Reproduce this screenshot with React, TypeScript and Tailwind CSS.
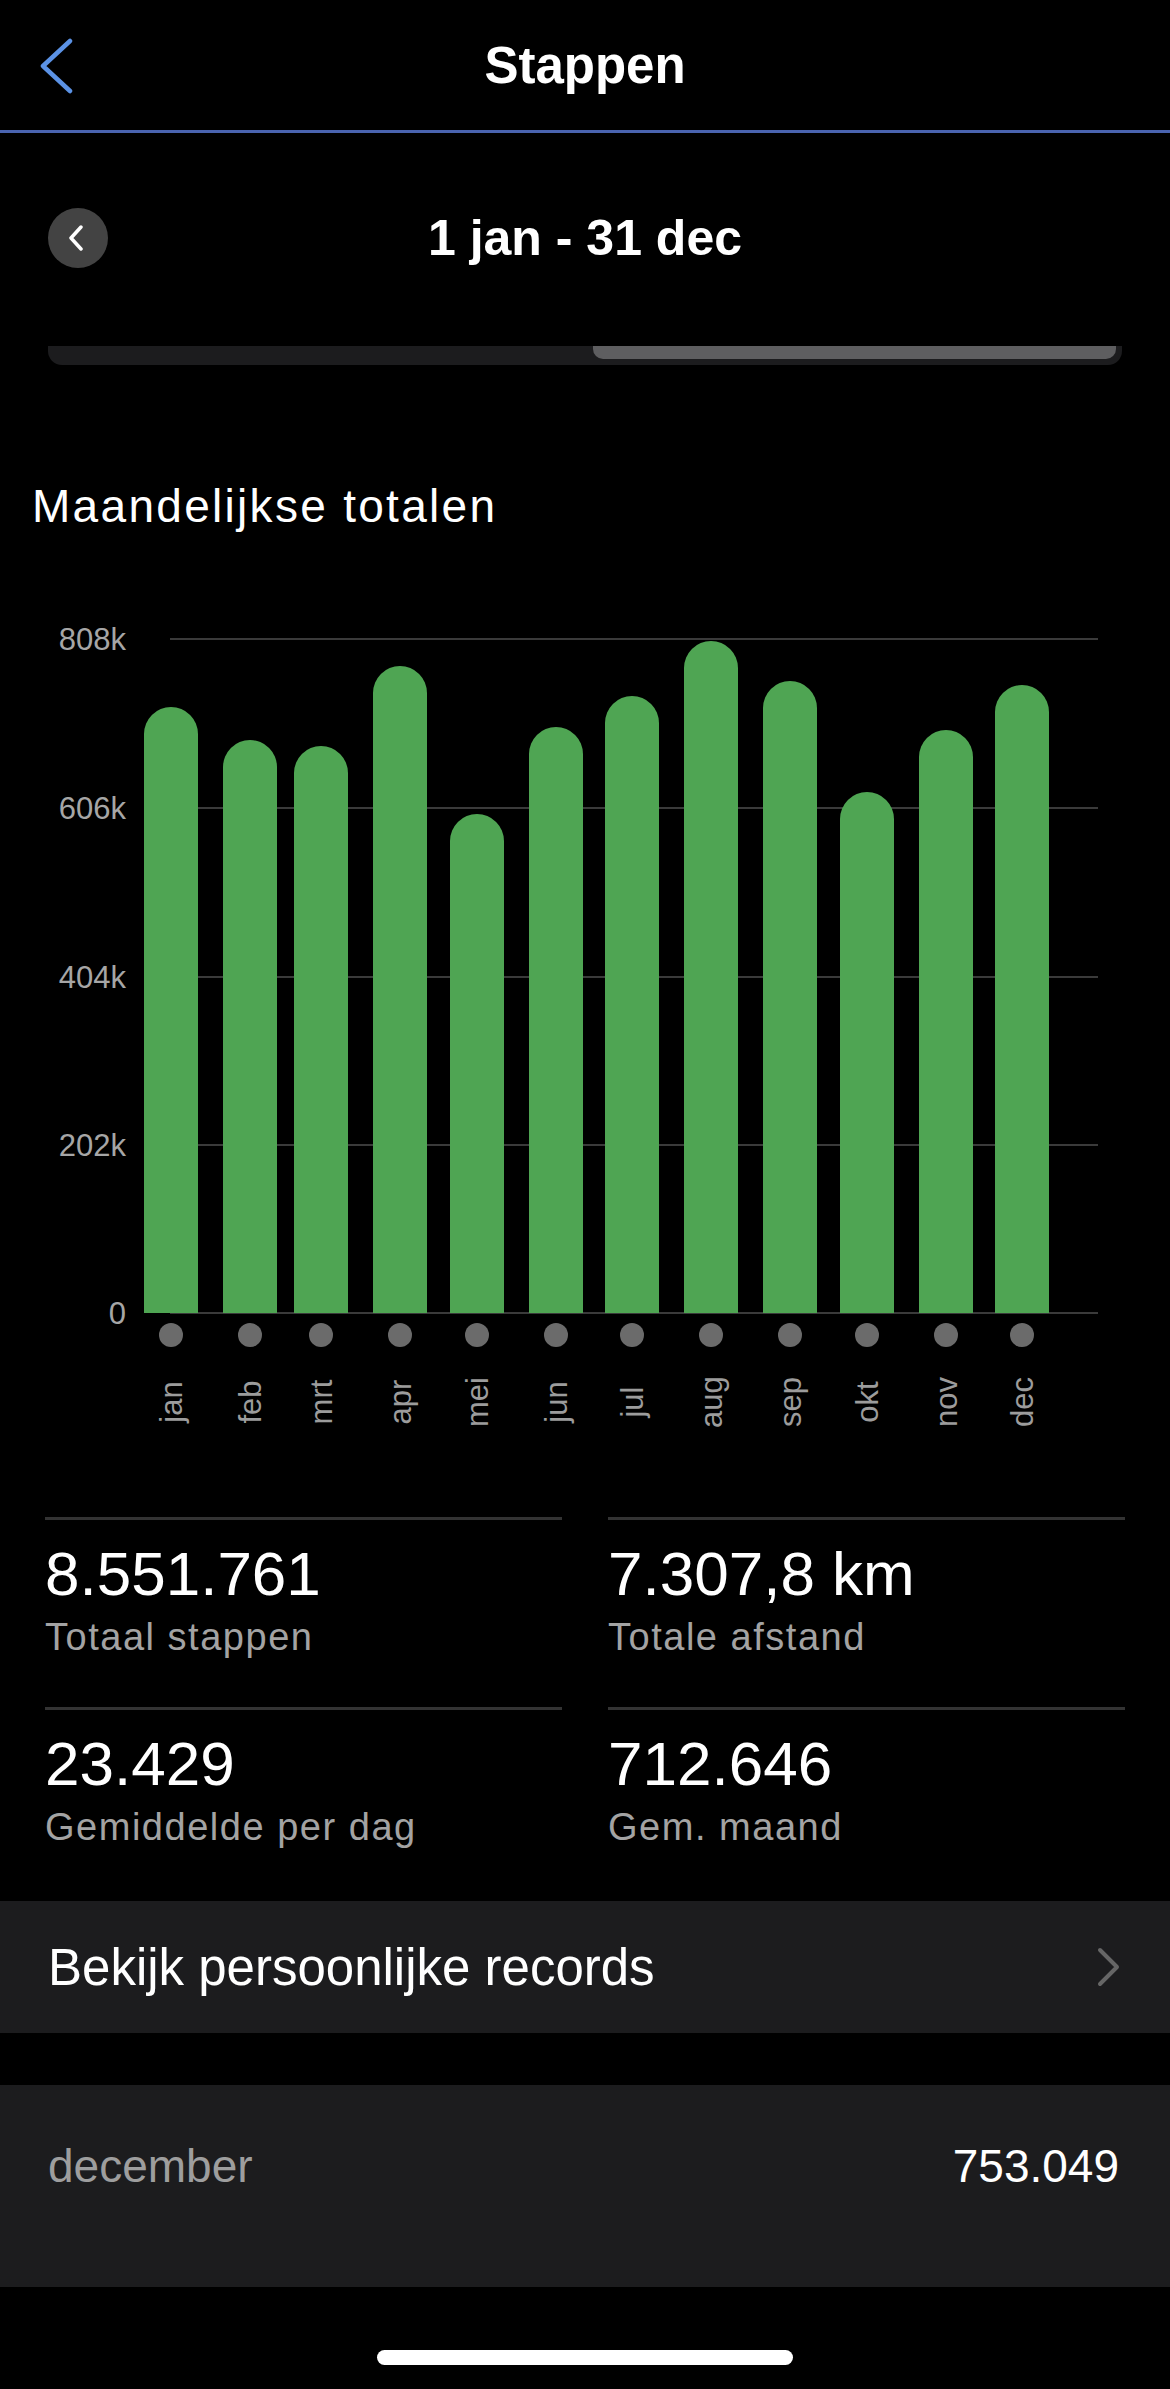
const months = [
  { m: "jan", x: 144, top: 707 },
  { m: "feb", x: 223, top: 740 },
  { m: "mrt", x: 294, top: 746 },
  { m: "apr", x: 373, top: 666 },
  { m: "mei", x: 450, top: 814 },
  { m: "jun", x: 529, top: 727 },
  { m: "jul", x: 605, top: 696 },
  { m: "aug", x: 684, top: 641 },
  { m: "sep", x: 763, top: 681 },
  { m: "okt", x: 840, top: 792 },
  { m: "nov", x: 919, top: 730 },
  { m: "dec", x: 995, top: 685 },
];

// chart svg starts at page y 580
const OFF = 580;
const BASE = 1313 - OFF;
const BAR_W = 54;
const R = BAR_W / 2;

const ticks = [
  { label: "808k", y: 639 },
  { label: "606k", y: 808 },
  { label: "404k", y: 977 },
  { label: "202k", y: 1145 },
  { label: "0", y: 1313 },
];

function Chart() {
  return (
    <svg width="1170" height="880" viewBox="0 0 1170 880" className="block">
      {ticks.map((t) => (
        <g key={t.label}>
          <line x1="170" x2="1098" y1={t.y - OFF} y2={t.y - OFF} stroke="#3a3a3a" strokeWidth="2" />
          <text
            x="126"
            y={t.y - OFF}
            textAnchor="end"
            dominantBaseline="central"
            fill="#a6a6a6"
            fontSize="31"
            fontFamily="'Liberation Sans', Arial, sans-serif"
          >
            {t.label}
          </text>
        </g>
      ))}
      {months.map((b) => {
        const top = b.top - OFF;
        const cx = b.x + R;
        return (
          <g key={b.m}>
            <path
              d={`M${b.x},${BASE} V${top + R} A${R},${R} 0 0 1 ${b.x + BAR_W},${top + R} V${BASE} Z`}
              fill="#4fa553"
            />
            <circle cx={cx} cy={1335 - OFF} r="12" fill="#6b6b6b" />
            <text
              x={cx}
              y={1402 - OFF}
              textAnchor="middle"
              dominantBaseline="central"
              fill="#9c9c9c"
              fontSize="31"
              fontFamily="'Liberation Sans', Arial, sans-serif"
              transform={`rotate(-90 ${cx} ${1402 - OFF})`}
            >
              {b.m}
            </text>
          </g>
        );
      })}
    </svg>
  );
}

function Stat({ value, label }: { value: string; label: string }) {
  return (
    <div className="border-t-[3px] border-[#333333] pt-[23px] pb-[51px]">
      <div className="text-[62px] leading-none text-white">{value}</div>
      <div className="mt-[13px] text-[38px] leading-none tracking-[0.04em] text-[#a3a3a3]">{label}</div>
    </div>
  );
}

export default function App() {
  return (
    <div className="w-[1170px] min-h-[2389px] bg-black text-white font-['Liberation_Sans',Arial,sans-serif] flex flex-col">
      {/* header */}
      <header className="h-[133px] border-b-[3px] border-[#4a64b0] grid grid-cols-[1fr_auto_1fr] items-center">
        <div className="pl-[40px] pt-[2px]">
          <svg width="34" height="56" viewBox="0 0 34 56">
            <path d="M30 3 L3 28 L30 53" fill="none" stroke="#5b92e5" strokeWidth="4.5" strokeLinecap="round" strokeLinejoin="round" />
          </svg>
        </div>
        <h1 className="text-[51px] leading-none font-bold">Stappen</h1>
        <div />
      </header>

      {/* date selector */}
      <div className="mt-[75px] px-[48px] grid grid-cols-[60px_1fr_60px] items-center">
        <div className="w-[60px] h-[60px] rounded-full bg-[#434343] flex items-center justify-center">
          <svg width="18" height="26" viewBox="0 0 18 26" className="mr-[4px]">
            <path d="M14 2 L4 13 L14 24" fill="none" stroke="#ffffff" strokeWidth="3.5" strokeLinecap="round" strokeLinejoin="round" />
          </svg>
        </div>
        <div className="text-center text-[50px] leading-none font-bold">1 jan - 31 dec</div>
        <div />
      </div>

      {/* clipped segmented control */}
      <div className="mt-[78px] mx-[48px] h-[19px] rounded-b-[14px] bg-[#1c1c1e] flex">
        <div className="ml-auto mr-[6px] w-[523px] h-[13px] rounded-b-[10px] bg-[#5e5e60]" />
      </div>

      <h2 className="mt-[118px] pl-[32px] text-[46px] leading-none tracking-[0.05em] text-white">
        Maandelijkse totalen
      </h2>

      <div className="mt-[51px]">
        <Chart />
      </div>

      {/* stats */}
      <div className="mt-[57px] px-[45px] grid grid-cols-2 gap-x-[46px]">
        <Stat value="8.551.761" label="Totaal stappen" />
        <Stat value="7.307,8 km" label="Totale afstand" />
        <Stat value="23.429" label="Gemiddelde per dag" />
        <Stat value="712.646" label="Gem. maand" />
      </div>

      {/* records */}
      <div className="mt-[4px] h-[132px] bg-[#1c1c1e] flex items-center justify-between pl-[48px] pr-[48px]">
        <span className="text-[51px] leading-none">Bekijk persoonlijke records</span>
        <svg width="26" height="40" viewBox="0 0 26 40">
          <path d="M4 3 L21 20 L4 37" fill="none" stroke="#666666" strokeWidth="4" strokeLinecap="round" strokeLinejoin="round" />
        </svg>
      </div>

      {/* month detail */}
      <div className="mt-[52px] h-[202px] bg-[#1c1c1e] flex items-start justify-between pl-[48px] pr-[51px] pt-[58px]">
        <span className="text-[46px] leading-none text-[#9e9e9e]">december</span>
        <span className="text-[46px] leading-none text-white">753.049</span>
      </div>

      {/* home indicator */}
      <div className="mt-[63px] flex justify-center">
        <div className="w-[416px] h-[15px] rounded-full bg-white" />
      </div>
    </div>
  );
}
